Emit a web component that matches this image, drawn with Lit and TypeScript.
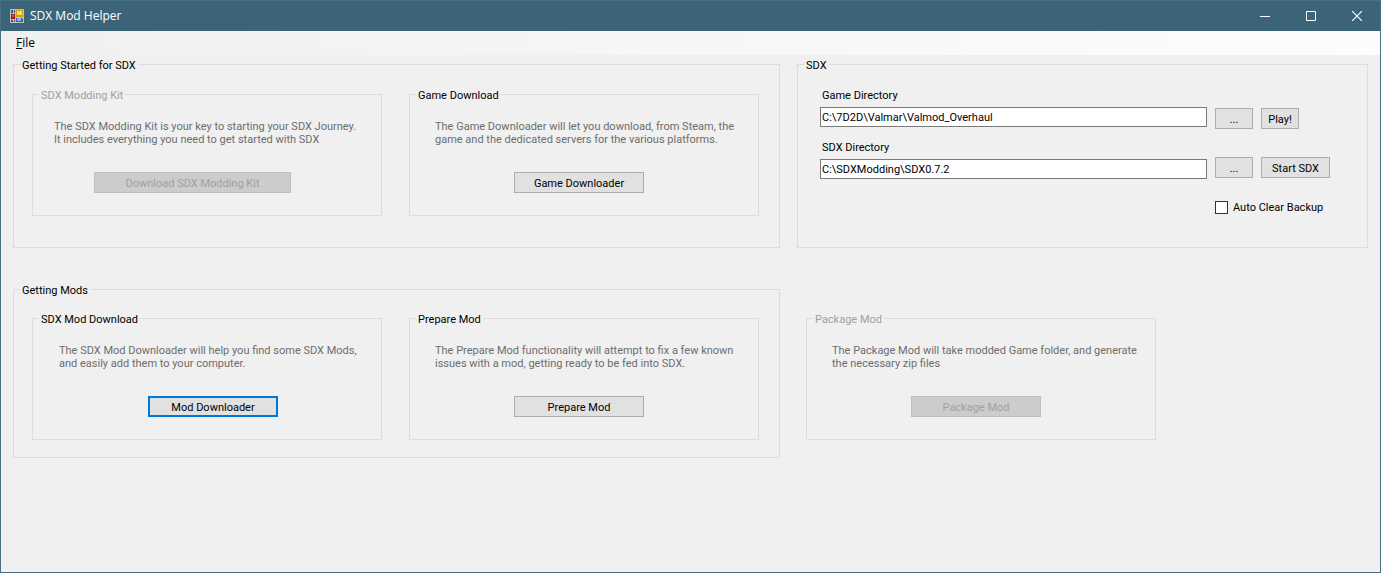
import { LitElement, html, css } from "lit";
import { customElement, property, state } from "lit/decorators.js";

const controls = css`
  fieldset {
    min-width: 0;
    margin: 0;
    border: 1px solid #dcdcdc;
    padding: 0;
  }
  legend {
    margin-left: 6px;
    padding: 2px 2px 0;
    line-height: 13px;
  }
  button {
    box-sizing: border-box;
    height: 21px;
    padding: 1px 0 0;
    border: 1px solid #adadad;
    border-radius: 0;
    background: #e1e1e1;
    color: #000;
    font: inherit;
    white-space: nowrap;
  }
  button:disabled {
    border-color: #bfbfbf;
    background: #cccccc;
    color: #a0a0a0;
  }
`;

@customElement("task-card")
export class TaskCard extends LitElement {
  @property() heading = "";
  @property() action = "";
  @property({ type: Array }) lines: string[] = [];
  @property({ type: Boolean }) disabled = false;
  @property({ type: Boolean }) primary = false;

  static styles = [
    controls,
    css`
      :host {
        display: block;
        min-width: 0;
        --pad: 18px 35px 22px 25px;
      }
      .body {
        padding: var(--pad);
      }
      .off {
        color: #a0a0a0;
      }
      .text {
        margin: 0 0 26px;
        color: #6d6d6d;
        white-space: nowrap;
      }
      .action {
        display: block;
        width: var(--action-width, 130px);
        margin: 0 auto;
      }
      .primary {
        border: 2px solid #0078d7;
      }
    `,
  ];

  render() {
    return html`<fieldset>
      <legend class=${this.disabled ? "off" : ""}>${this.heading}</legend>
      <div class="body">
        <p class="text">${this.lines[0]}<br />${this.lines[1]}</p>
        <button class="action ${this.primary ? "primary" : ""}" ?disabled=${this.disabled}>
          ${this.action}
        </button>
      </div>
    </fieldset>`;
  }
}

@customElement("app-root")
export class AppRoot extends LitElement {
  @state() private gameDir = "C:\\7D2D\\Valmar\\Valmod_Overhaul";
  @state() private sdxDir = "C:\\SDXModding\\SDX0.7.2";

  static styles = [
    controls,
    css`
      :host {
        display: block;
      }
      .window {
        box-sizing: border-box;
        min-height: 100vh;
        border: 1px solid #477085;
        background: #f0f0f0;
        color: #000;
        font: 11px/13px Roboto, "Liberation Sans", Arial, sans-serif;
      }
      .title {
        display: flex;
        align-items: center;
        height: 30px;
        padding-left: 9px;
        background: #3c6478;
        color: #fff;
        font: 12px/16px "Open Sans", "Noto Sans", sans-serif;
      }
      .name {
        flex: 1;
        margin: 0 0 0 6px;
        font: inherit;
      }
      .caption {
        display: grid;
        place-items: center;
        width: 46px;
        height: 29px;
        padding: 0;
        border: 0;
        background: none;
      }
      .menu {
        display: flex;
        align-items: center;
        height: 24px;
        padding-left: 9px;
        background: linear-gradient(90deg, #f0f0f0, #fdfdfd);
      }
      .menu-item {
        padding: 0 6px;
        border: 0;
        background: none;
        font: 12px/16px "Open Sans", "Noto Sans", sans-serif;
      }
      .main {
        display: grid;
        grid-template-columns: 767fr 571fr;
        align-items: start;
        gap: 34px 17px;
        padding: 2px 12px;
      }
      .pair {
        display: grid;
        grid-template-columns: 1fr 1fr;
        gap: 27px;
        padding: 15px 20px 31px 18px;
      }
      .mods {
        padding: 14px 20px 17px 18px;
      }
      .kit {
        --pad: 18px 50px 22px 21px;
        --action-width: 197px;
      }
      .download {
        --pad: 18px 14px 22px 26px;
      }
      .package {
        max-width: 350px;
        margin: 29px 0 0 9px;
      }
      .paths {
        display: grid;
        grid-template-columns: 1fr 38px 69px;
        grid-template-rows: auto 22px auto 22px auto;
        column-gap: 8px;
        padding: 17px 37px 33px 22px;
      }
      .label {
        grid-column: 1 / -1;
        padding: 0 2px 5px;
      }
      .second {
        padding: 12px 2px 3px;
      }
      .path {
        box-sizing: border-box;
        width: 100%;
        min-width: 0;
        height: 20px;
        padding: 0 1px;
        border: 1px solid #7a7a7a;
        border-radius: 0;
        background: #fff;
        color: #000;
        font: inherit;
      }
      .low {
        align-self: end;
      }
      .play {
        justify-self: start;
        width: 38px;
      }
      .check {
        display: flex;
        grid-column: 2 / -1;
        align-items: center;
        gap: 5px;
        padding-top: 22px;
        white-space: nowrap;
      }
      .box {
        appearance: none;
        box-sizing: border-box;
        flex: none;
        width: 13px;
        height: 13px;
        margin: 0;
        border: 1px solid #333;
        background: #fff;
      }
      .box:checked {
        background: #333;
        box-shadow: inset 0 0 0 2px #fff;
      }
    `,
  ];

  render() {
    return html`
      <div class="window">
        <header class="title">
          <svg width="14" height="14" viewBox="0 0 14 14" aria-hidden="true">
            <path fill="#b9bfc2" d="M0 0h14v14H0z" />
            <path fill="#3c6478" d="M1 1h4v3H1zM1 11h4v2H1zM12 10h1v3h-1z" />
            <path fill="#b9bfc2" d="M3 1h1v3H3zM3 11h1v2H3z" />
            <path fill="#a01818" d="M1 5h4v5H1z" />
            <path fill="#e05a4a" d="M2 6h2v2H2z" />
            <path fill="#d39a1c" d="M6 1h7v7H6z" />
            <path fill="#ffdf62" d="M7 2h5v4H7z" />
            <path fill="#2a62c0" d="M6 9h6v4H6z" />
            <path fill="#86b8f8" d="M7 9h4v3H7z" />
          </svg>
          <h1 class="name">SDX Mod Helper</h1>
          <button class="caption" aria-label="Minimize">
            <svg width="10" height="11"><path fill="#fff" d="M0 5h10v1H0z" /></svg>
          </button>
          <button class="caption" aria-label="Maximize">
            <svg width="10" height="10">
              <path fill="none" stroke="#fff" d="M.5.5h9v9h-9z" />
            </svg>
          </button>
          <button class="caption" aria-label="Close">
            <svg width="10" height="10">
              <path stroke="#fff" stroke-width="1.2" d="M0 0l10 10M10 0L0 10" />
            </svg>
          </button>
        </header>
        <nav class="menu">
          <button class="menu-item"><u>F</u>ile</button>
        </nav>
        <main class="main">
          <fieldset>
            <legend>Getting Started for SDX</legend>
            <div class="pair">
              <task-card
                class="kit"
                heading="SDX Modding Kit"
                action="Download SDX Modding Kit"
                disabled
                .lines=${[
                  "The SDX Modding Kit is your key to starting your SDX Journey.",
                  "It includes everything you need to get started with SDX",
                ]}
              ></task-card>
              <task-card
                heading="Game Download"
                action="Game Downloader"
                .lines=${[
                  "The Game Downloader will let you download, from Steam, the",
                  "game and the dedicated servers for the various platforms.",
                ]}
              ></task-card>
            </div>
          </fieldset>

          <fieldset>
            <legend>SDX</legend>
            <div class="paths">
              <label class="label" for="game">Game Directory</label>
              <input class="path" id="game" .value=${this.gameDir} />
              <button class="low">...</button>
              <button class="low play">Play!</button>
              <label class="label second" for="sdx">SDX Directory</label>
              <input class="low path" id="sdx" .value=${this.sdxDir} />
              <button>...</button>
              <button>Start SDX</button>
              <label class="check"><input class="box" type="checkbox" />Auto Clear Backup</label>
            </div>
          </fieldset>

          <fieldset>
            <legend>Getting Mods</legend>
            <div class="pair mods">
              <task-card
                class="download"
                heading="SDX Mod Download"
                action="Mod Downloader"
                primary
                .lines=${[
                  "The SDX Mod Downloader will help you find some SDX Mods,",
                  "and easily add them to your computer.",
                ]}
              ></task-card>
              <task-card
                heading="Prepare Mod"
                action="Prepare Mod"
                .lines=${[
                  "The Prepare Mod functionality will attempt to fix a few known",
                  "issues with a mod, getting ready to be fed into SDX.",
                ]}
              ></task-card>
            </div>
          </fieldset>

          <task-card
            class="package"
            heading="Package Mod"
            action="Package Mod"
            disabled
            .lines=${[
              "The Package Mod will take modded Game folder, and generate",
              "the necessary zip files",
            ]}
          ></task-card>
        </main>
      </div>
    `;
  }
}
